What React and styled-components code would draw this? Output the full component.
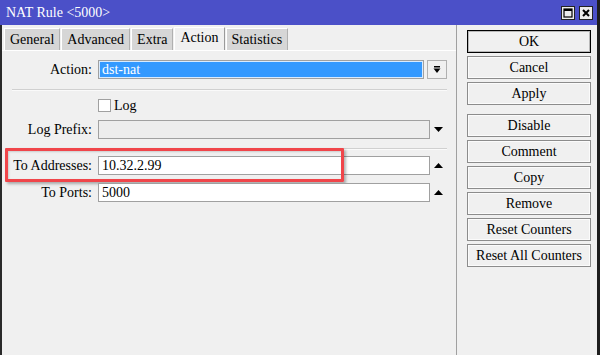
import React from 'react';
import styled, { createGlobalStyle } from 'styled-components';

const Global = createGlobalStyle`
  html, body { margin: 0; padding: 0; background: #f0f0f0; }
  body { font-family: "Liberation Serif", serif; font-size: 14px; color: #000; }
`;

const Window = styled.div`
  width: 600px;
  height: 355px;
  display: flex;
  flex-direction: column;
  box-sizing: border-box;
  border-right: 3px solid #1e1e1e;
  background: #f0f0f0;
  overflow: hidden;
  font-family: "Liberation Serif", serif;
  font-size: 14px;
`;

const TitleBar = styled.div`
  height: 25px;
  flex: none;
  background: #4b50c8;
  color: #fff;
  display: flex;
  align-items: center;
  padding: 0 4px 0 6px;
`;

const Title = styled.div`
  flex: 1;
  padding-top: 1px;
`;

const TitleButton = styled.div`
  width: 12px;
  height: 12px;
  background: #ececec;
  border: 1px solid #222;
  margin-left: 4px;
  display: flex;
  align-items: center;
  justify-content: center;
`;

const Body = styled.div`
  flex: 1;
  display: flex;
  border-left: 2px solid #2a2a2a;
`;

const Main = styled.div`
  width: 454px;
  flex: none;
  display: flex;
  flex-direction: column;
`;

const TabBar = styled.div`
  display: flex;
  align-items: flex-end;
  height: 25px;
  padding-left: 2px;
  gap: 1px;
`;

const Tab = styled.div`
  height: ${p => (p.$active ? 23 : 22)}px;
  box-sizing: border-box;
  padding: 0 5px ${p => (p.$active ? 3 : 0)}px;
  display: flex;
  align-items: center;
  background: ${p => (p.$active ? '#f0f0f0' : '#d6d6d6')};
  border-top: 1px solid #fff;
  border-left: 1px solid #fff;
  border-right: 1px solid ${p => (p.$active ? '#9a9a9a' : '#b0b0b0')};
`;

const Panel = styled.div`
  flex: 1;
  display: flex;
  flex-direction: column;
  padding-top: 9px;
  border-top: 1px solid #fff;
`;

const Row = styled.div`
  position: relative;
  display: flex;
  align-items: center;
  height: 19px;
  margin-top: ${p => p.$mt || 0}px;
`;

const Label = styled.div`
  width: 90px;
  margin-right: 6px;
  text-align: right;
  white-space: nowrap;
`;

const Field = styled.div`
  box-sizing: border-box;
  width: ${p => p.$w || 332}px;
  height: 19px;
  border: 1px solid #a0a0a0;
  background: ${p => (p.$disabled ? '#ededed' : '#fff')};
  padding-left: 3px;
  display: flex;
  align-items: center;
  line-height: 1;
`;

const SelectField = styled(Field)`
  background: #3399ff;
  color: #fff;
  box-shadow: inset 0 0 0 1px #d8ebff;
`;

const DropButton = styled.div`
  box-sizing: border-box;
  width: 20px;
  height: 19px;
  margin-left: 3px;
  border: 1px solid #b0b0b0;
  background: #f0f0f0;
  display: flex;
  align-items: center;
  justify-content: center;
`;

const ArrowCell = styled.div`
  width: 17px;
  display: flex;
  align-items: center;
  justify-content: center;
`;

const Separator = styled.div`
  height: 1px;
  background: #d0d0d0;
  border-bottom: 1px solid #fafafa;
  margin: ${p => p.$mt}px 9px 0 10px;
`;

const Check = styled.div`
  width: 11px;
  height: 11px;
  background: #fff;
  border: 1px solid #a0a0a0;
  margin-left: 96px;
  margin-right: 3px;
`;

const Highlight = styled.div`
  position: absolute;
  left: 3px;
  top: -8px;
  width: 339px;
  height: 34px;
  box-sizing: border-box;
  border: 3px solid #f0454a;
  border-radius: 1px;
  box-shadow: 2px 2px 3px rgba(0, 0, 0, 0.3), inset 1px 1px 2px rgba(0, 0, 0, 0.15);
  pointer-events: none;
`;

const Side = styled.div`
  flex: 1;
  border-left: 1px solid #a0a0a0;
  padding: 5px 0 0 10px;
  display: flex;
  flex-direction: column;
`;

const Button = styled.div`
  box-sizing: border-box;
  width: 124px;
  height: 23px;
  margin-top: ${p => p.$mt ?? 3}px;
  border: 1px solid ${p => (p.$default ? '#000' : '#8c8c8c')};
  box-shadow: inset 0 0 0 1px ${p => (p.$default ? '#b8b8b8' : '#fbfbfb')};
  background: #f0f0f0;
  display: flex;
  align-items: center;
  justify-content: center;
  white-space: nowrap;
`;

const DropIcon = () => (
  <svg width="8" height="8" viewBox="0 0 8 8">
    <rect x="1" y="0" width="6" height="1.5" fill="#000" />
    <path d="M0.5 2.5 L7.5 2.5 L4 7 Z" fill="#000" />
  </svg>
);

const Tri = ({ up }) => (
  <svg width="9" height="5" viewBox="0 0 9 5">
    <path d={up ? 'M0 5 L9 5 L4.5 0 Z' : 'M0 0 L9 0 L4.5 5 Z'} fill="#000" />
  </svg>
);

const tabs = ['General', 'Advanced', 'Extra', 'Action', 'Statistics'];
const buttons = [
  ['OK', 0, true],
  ['Cancel'],
  ['Apply'],
  ['Disable', 9],
  ['Comment'],
  ['Copy'],
  ['Remove'],
  ['Reset Counters'],
  ['Reset All Counters'],
];

export default function App() {
  return (
    <>
      <Global />
      <Window>
        <TitleBar>
          <Title>NAT Rule &lt;5000&gt;</Title>
          <TitleButton>
            <svg width="10" height="10" viewBox="0 0 10 10">
              <rect x="1" y="1" width="8" height="8" fill="none" stroke="#000" strokeWidth="1.2" />
              <rect x="1" y="1" width="8" height="2" fill="#000" />
            </svg>
          </TitleButton>
          <TitleButton>
            <svg width="10" height="10" viewBox="0 0 10 10">
              <path d="M2 2 L8 8 M8 2 L2 8" stroke="#000" strokeWidth="2" />
            </svg>
          </TitleButton>
        </TitleBar>
        <Body>
          <Main>
            <TabBar>
              {tabs.map(t => (
                <Tab key={t} $active={t === 'Action'}>{t}</Tab>
              ))}
            </TabBar>
            <Panel>
              <Row>
                <Label>Action:</Label>
                <SelectField $w={326}>dst-nat</SelectField>
                <DropButton><DropIcon /></DropButton>
              </Row>
              <Separator $mt={10} />
              <Row $mt={5}>
                <Check />
                <span>Log</span>
              </Row>
              <Row $mt={5}>
                <Label>Log Prefix:</Label>
                <Field $disabled />
                <ArrowCell><Tri /></ArrowCell>
              </Row>
              <Separator $mt={9} />
              <Row $mt={6}>
                <Highlight />
                <Label>To Addresses:</Label>
                <Field>10.32.2.99</Field>
                <ArrowCell><Tri up /></ArrowCell>
              </Row>
              <Row $mt={8}>
                <Label>To Ports:</Label>
                <Field>5000</Field>
                <ArrowCell><Tri up /></ArrowCell>
              </Row>
            </Panel>
          </Main>
          <Side>
            {buttons.map(([label, mt, def]) => (
              <Button key={label} $mt={mt} $default={def}>{label}</Button>
            ))}
          </Side>
        </Body>
      </Window>
    </>
  );
}
